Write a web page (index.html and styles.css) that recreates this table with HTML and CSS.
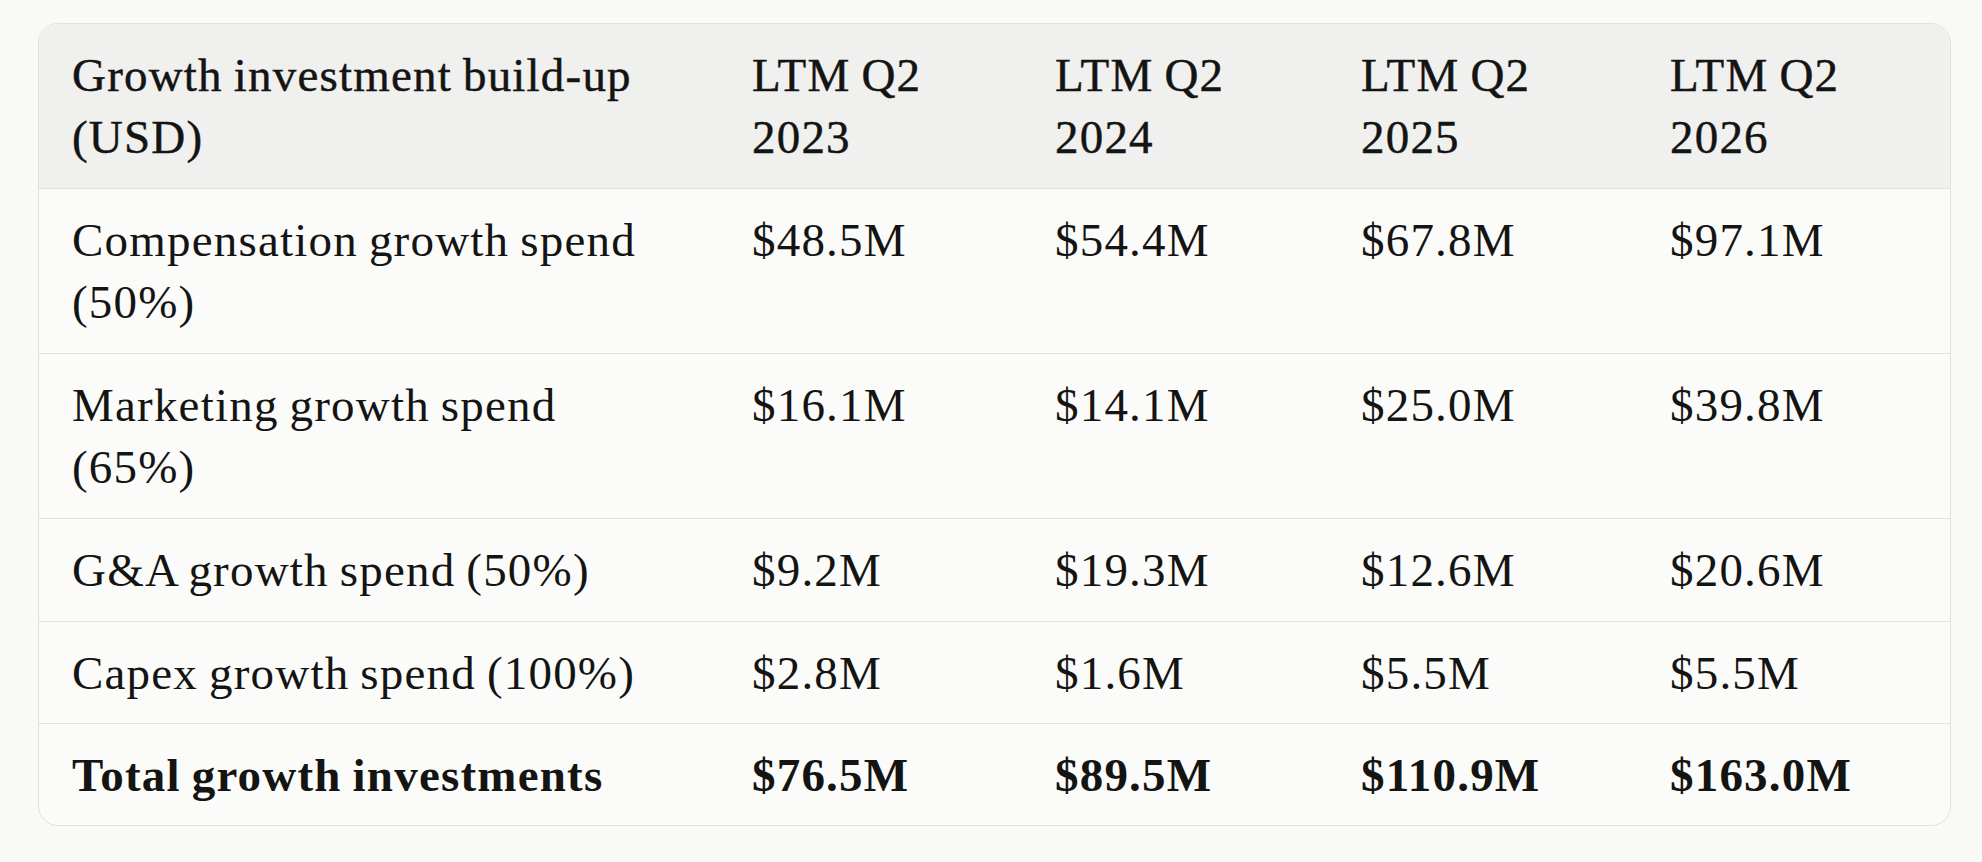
FILE: index.html
```html
<!DOCTYPE html>
<html lang="en">
<head>
<meta charset="utf-8">
<title>Growth investment build-up</title>
<link rel="stylesheet" href="styles.css">
</head>
<body>
<div class="table-card">
  <table class="data-table">
    <colgroup>
      <col class="col-label">
      <col class="col-a">
      <col class="col-b">
      <col class="col-c">
      <col class="col-d">
    </colgroup>
    <thead>
      <tr>
        <th>Growth investment build-up (USD)</th>
        <th>LTM Q2 2023</th>
        <th>LTM Q2 2024</th>
        <th>LTM Q2 2025</th>
        <th>LTM Q2 2026</th>
      </tr>
    </thead>
    <tbody>
      <tr>
        <td>Compensation growth spend (50%)</td>
        <td>$48.5M</td>
        <td>$54.4M</td>
        <td>$67.8M</td>
        <td>$97.1M</td>
      </tr>
      <tr>
        <td>Marketing growth spend (65%)</td>
        <td>$16.1M</td>
        <td>$14.1M</td>
        <td>$25.0M</td>
        <td>$39.8M</td>
      </tr>
      <tr>
        <td>G&amp;A growth spend (50%)</td>
        <td>$9.2M</td>
        <td>$19.3M</td>
        <td>$12.6M</td>
        <td>$20.6M</td>
      </tr>
      <tr class="compact-row">
        <td>Capex growth spend (100%)</td>
        <td>$2.8M</td>
        <td>$1.6M</td>
        <td>$5.5M</td>
        <td>$5.5M</td>
      </tr>
      <tr class="compact-row total-row">
        <td>Total growth investments</td>
        <td>$76.5M</td>
        <td>$89.5M</td>
        <td>$110.9M</td>
        <td>$163.0M</td>
      </tr>
    </tbody>
  </table>
</div>
</body>
</html>
```

FILE: styles.css
```css
html, body {
  margin: 0;
  padding: 0;
  background: #f9f9f7;
}

body {
  font-family: "Liberation Serif", "Times New Roman", serif;
  color: #141413;
}

.table-card {
  box-sizing: border-box;
  width: 1913px;
  margin: 23px 31px 0 38px;
  border: 1px solid #e1e1de;
  border-radius: 20px;
  overflow: hidden;
  background: #fbfbfa;
}

.data-table {
  width: 100%;
  table-layout: fixed;
  border-collapse: collapse;
  font-size: 47px;
  line-height: 62px;
  letter-spacing: 1.2px;
  word-spacing: -2px;
}

.col-label { width: 680px; }
.col-a { width: 303px; }
.col-b { width: 306px; }
.col-c { width: 309px; }
.col-d { width: 313px; }

.data-table th,
.data-table td {
  padding: 20px 33px;
  text-align: left;
  vertical-align: top;
  border-bottom: 1px solid #e1e1de;
}

.data-table th:first-child,
.data-table td:first-child {
  padding-right: 60px;
}

.data-table thead th {
  background: #f0f0ee;
  font-weight: 400;
  -webkit-text-stroke: 0.45px #141413;
}

.data-table .compact-row td {
  padding-bottom: 19px;
}

.data-table tbody tr:last-child td {
  border-bottom: none;
}

.total-row td {
  font-weight: 700;
}
```
